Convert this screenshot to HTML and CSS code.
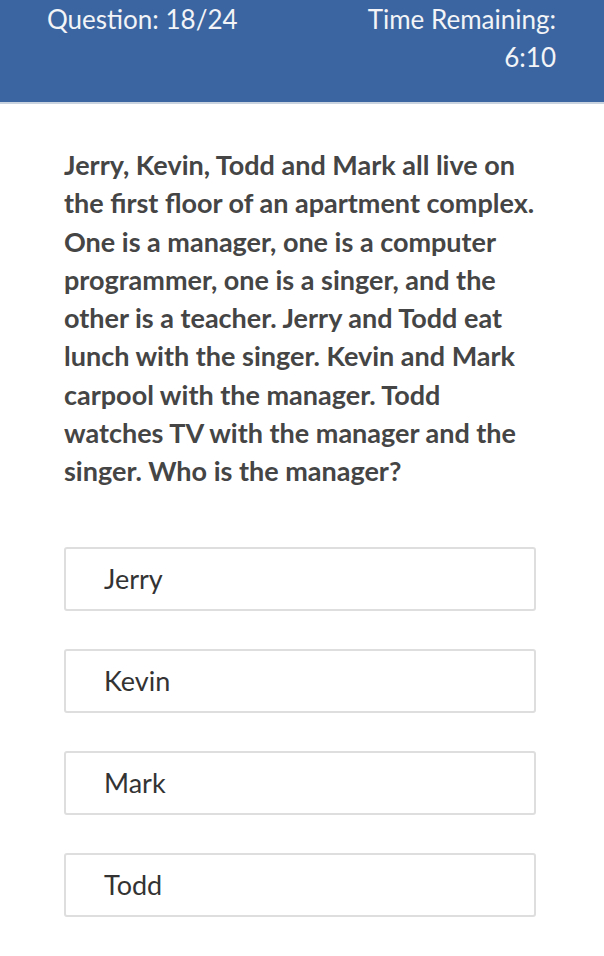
FILE: index.html
```html
<!DOCTYPE html>
<html lang="en">
<head>
    <meta charset="UTF-8">
    <meta name="viewport" content="width=device-width, initial-scale=1.0">
    <title>Quiz</title>
    <link rel="stylesheet" href="styles.css">
</head>
<body>
    <div class="quiz-header">
        <div class="question-count">Question: 18/24</div>
        <div class="timer">
            <div>Time Remaining:</div>
            <div>6:10</div>
        </div>
    </div>
    <div class="quiz-body">
        <p class="question-text">Jerry, Kevin, Todd and Mark all live on the first floor of an apartment complex. One is a manager, one is a computer programmer, one is a singer, and the other is a teacher. Jerry and Todd eat lunch with the singer. Kevin and Mark carpool with the manager. Todd watches TV with the manager and the singer. Who is the manager?</p>
        <div class="answer-list">
            <div class="answer">Jerry</div>
            <div class="answer">Kevin</div>
            <div class="answer">Mark</div>
            <div class="answer">Todd</div>
        </div>
    </div>
</body>
</html>
```

FILE: styles.css
```css
body, html { margin: 0; padding: 0; background: #fff; font-family: Lato, 'Open Sans', sans-serif; }
.quiz-header { display: flex; justify-content: space-between; height: 104px; padding: 0 48px 0 47px; background: #3b65a0; color: #f2f4f7; font-size: 26px; line-height: 38px; border-bottom: 2px solid #c9d3e0; box-sizing: border-box; }
.timer { text-align: right; }
.quiz-body { padding: 42px 64px 0 64px; }
.question-text { margin: 0; font-size: 27px; font-weight: bold; line-height: 38.3px; color: #454545; }
.answer-list { display: flex; flex-direction: column; gap: 38px; margin-top: 56px; margin-right: 4px; }
.answer { height: 64px; box-sizing: border-box; display: flex; align-items: center; padding-left: 38px; border: 2px solid #dedede; border-radius: 3px; font-size: 27px; color: #333; }
```
